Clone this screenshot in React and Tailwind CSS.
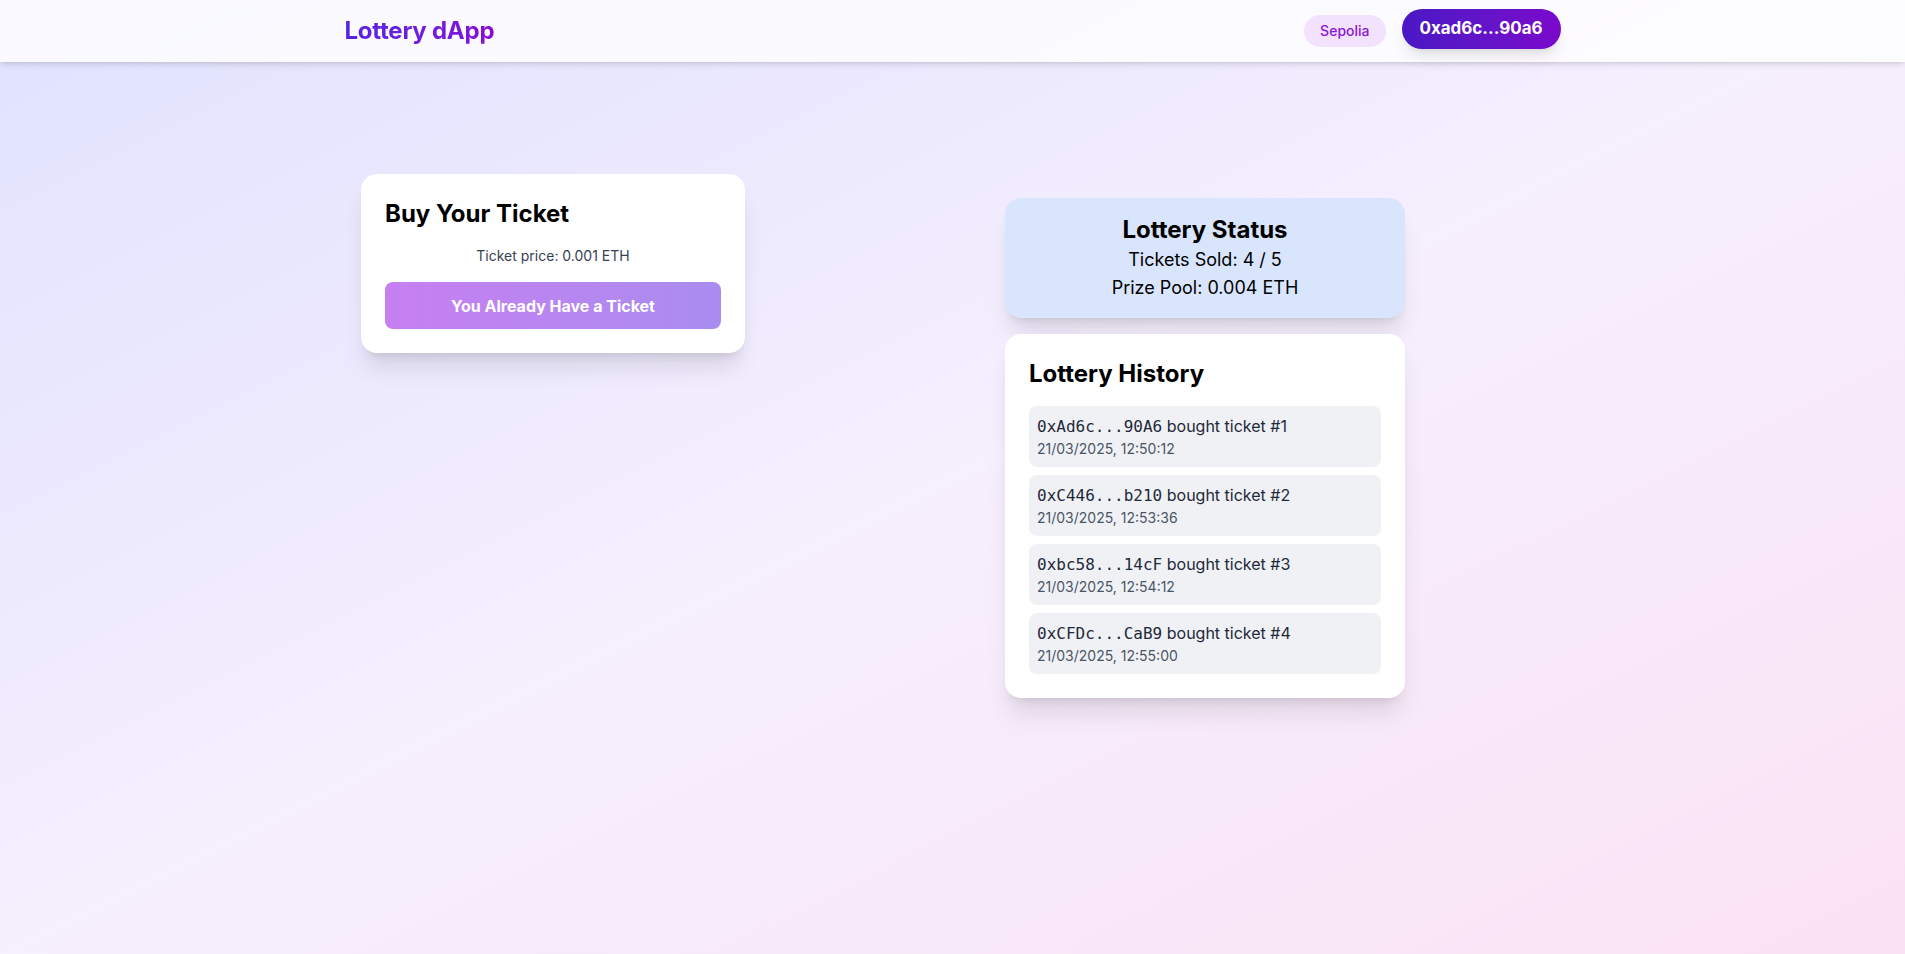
import React from "react";

const history = [
  { addr: "0xAd6c...90A6", n: 1, t: "21/03/2025, 12:50:12" },
  { addr: "0xC446...b210", n: 2, t: "21/03/2025, 12:53:36" },
  { addr: "0xbc58...14cF", n: 3, t: "21/03/2025, 12:54:12" },
  { addr: "0xCFDc...CaB9", n: 4, t: "21/03/2025, 12:55:00" },
];

export default function App() {
  return (
    <div
      className="min-h-screen bg-gradient-to-br from-[#e0e2fe] via-[#f6effe] to-[#fae2f4] text-black"
      style={{ fontFamily: "Inter, 'Noto Sans', sans-serif" }}
    >
      <header className="h-[62px] bg-white/80 shadow-md">
        <div className="max-w-7xl mx-auto px-8 h-full flex items-center justify-between">
          <h1 className="text-2xl font-bold tracking-[-0.01em] bg-gradient-to-r from-[#5423e2] to-[#870ad9] bg-clip-text text-transparent">
            Lottery dApp
          </h1>
          <div className="flex items-center gap-4">
            <span className="h-8 px-4 flex items-center rounded-full bg-[#f3e2fe] text-[#8b16d6] text-sm font-medium">
              Sepolia
            </span>
            <button className="h-10 w-[159px] mb-1 rounded-full bg-gradient-to-r from-[#4a17c4] to-[#7a07cc] text-white text-[17px] font-bold shadow-lg">
              0xad6c...90a6
            </button>
          </div>
        </div>
      </header>

      <main className="flex items-start pl-[361px] pt-[112px] gap-[260px]">
        <div className="w-96 bg-white rounded-2xl shadow-xl p-6">
          <h2 className="text-2xl font-bold mb-4">Buy Your Ticket</h2>
          <p className="text-sm text-gray-700 text-center mb-4">Ticket price: 0.001 ETH</p>
          <button className="w-full h-[47px] rounded-lg bg-gradient-to-r from-[#c77ff2] to-[#a98cf0] text-white font-bold text-base">
            You Already Have a Ticket
          </button>
        </div>

        <div className="w-[400px] mt-6 flex flex-col gap-4">
          <div className="bg-[#d9e5fd] rounded-2xl shadow-xl p-4 text-center">
            <h2 className="text-2xl font-bold">Lottery Status</h2>
            <p className="text-lg">Tickets Sold: 4 / 5</p>
            <p className="text-lg">Prize Pool: 0.004 ETH</p>
          </div>
          <div className="bg-white rounded-2xl shadow-xl p-6">
            <h2 className="text-2xl font-bold mb-4">Lottery History</h2>
            <div className="flex flex-col gap-2">
              {history.map((h) => (
                <div key={h.n} className="h-[61px] bg-[#f0f1f5] rounded-lg px-2 pt-2">
                  <p className="text-base text-gray-800 leading-6">
                    <span style={{ fontFamily: "'DejaVu Sans Mono', 'Liberation Mono', monospace" }} className="text-base">
                      {h.addr}
                    </span>{" "}
                    bought ticket #{h.n}
                  </p>
                  <p className="text-sm text-gray-600">{h.t}</p>
                </div>
              ))}
            </div>
          </div>
        </div>
      </main>
    </div>
  );
}
